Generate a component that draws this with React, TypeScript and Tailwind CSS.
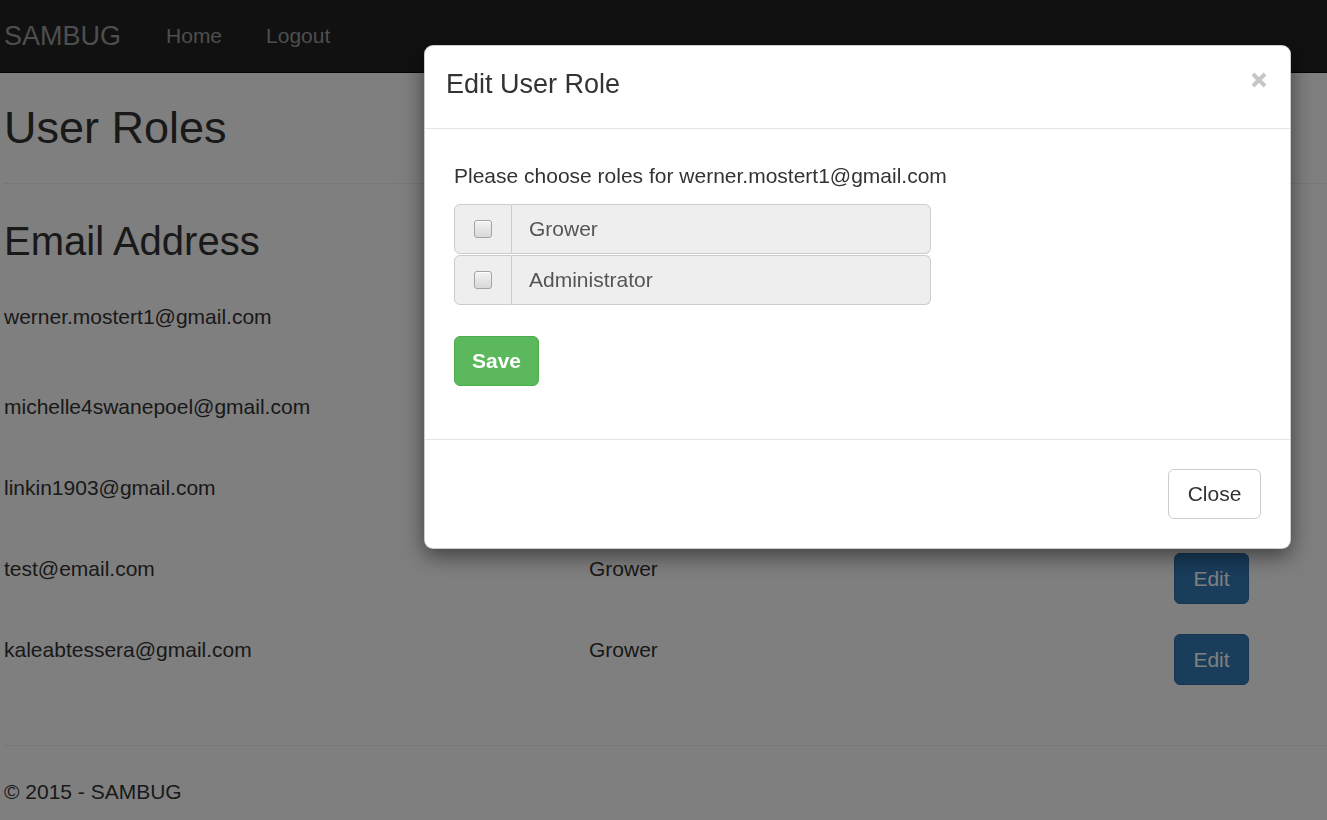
import React from 'react'

const users = [
  { email: 'werner.mostert1@gmail.com', role: 'Administrator', h: 'h-[90px]' },
  { email: 'michelle4swanepoel@gmail.com', role: 'Grower', h: 'h-[81px]' },
  { email: 'linkin1903@gmail.com', role: 'Grower', h: 'h-[81px]' },
  { email: 'test@email.com', role: 'Grower', h: 'h-[81px]' },
  { email: 'kaleabtessera@gmail.com', role: 'Grower', h: 'h-[81px]' },
]

const roles = ['Grower', 'Administrator']

const RoleRow: React.FC<{ label: string; first?: boolean }> = ({ label, first }) => (
  <div className={`flex w-[477px] h-[50px] ${first ? '' : 'mt-[1px]'}`}>
    <div className="w-[58px] bg-[#eee] border border-[#ccc] rounded-l-[6px] flex items-center justify-center">
      <span className="block w-[18px] h-[18px] rounded-[3px] border border-[#a3a3a3] bg-gradient-to-b from-[#f3f3f3] to-[#d9d9d9] shadow-[inset_0_1px_0_#fff]" />
    </div>
    <div className="flex-1 bg-[#eee] border border-l-0 border-[#ccc] rounded-r-[6px] pl-[17px] flex items-center text-[#555]">
      {label}
    </div>
  </div>
)

export default function App() {
  return (
    <div className="relative min-h-screen bg-white text-[#333] text-[21px] leading-[28px] font-['Liberation_Sans',Arial,sans-serif]">
      {/* Navbar */}
      <nav className="h-[73px] bg-[#222] border-b border-[#080808] flex items-center text-[#9d9d9d]">
        <span className="pl-[4px] text-[27px]">SAMBUG</span>
        <span className="ml-[45px]">Home</span>
        <span className="ml-[44px]">Logout</span>
      </nav>

      {/* Page */}
      <main className="pl-[4px]">
        <h1 className="mt-[30px] text-[45px] leading-[50px]">User Roles</h1>
        <hr className="mt-[30px] border-0 border-t border-[#eee]" />
        <h2 className="mt-[35px] text-[40px] leading-[44px]">Email Address</h2>

        <div className="mt-[23px]">
          {users.map((u) => (
            <div key={u.email} className={`grid grid-cols-[585px_585px_auto] pt-[15px] ${u.h}`}>
              <div className="pt-[2px]">{u.email}</div>
              <div className="pt-[2px]">{u.role}</div>
              <div>
                <button className="w-[75px] h-[51px] bg-[#337ab7] border border-[#2e6da4] rounded-[6px] text-white">
                  Edit
                </button>
              </div>
            </div>
          ))}
        </div>

        <hr className="mt-[45px] border-0 border-t border-[#eee]" />
        <footer className="mt-[32px]">© 2015 - SAMBUG</footer>
      </main>

      {/* Backdrop */}
      <div className="fixed inset-0 bg-black/50 z-[5]" />

      {/* Modal */}
      <div className="absolute left-[424px] top-[45px] w-[867px] z-10 bg-white border border-black/20 rounded-[9px] shadow-[0_7px_21px_rgba(0,0,0,0.5)]">
        <div className="h-[83px] border-b border-[#e5e5e5] flex items-start justify-between pl-[21px] pr-[23px] pt-[20px]">
          <h4 className="text-[27px] leading-[37px]">Edit User Role</h4>
          <button className="mt-[6px]" aria-label="Close">
            <svg width="16" height="16" viewBox="0 0 16 16">
              <path d="M2 2 L14 14 M14 2 L2 14" stroke="#c6c6c6" strokeWidth="4" strokeLinecap="butt" />
            </svg>
          </button>
        </div>

        <div className="pl-[29px] pt-[33px] pb-[53px]">
          <p>Please choose roles for werner.mostert1@gmail.com</p>
          <div className="mt-[14px]">
            {roles.map((r, i) => (
              <RoleRow key={r} label={r} first={i === 0} />
            ))}
          </div>
          <button className="mt-[31px] w-[85px] h-[50px] bg-[#5cb85c] border border-[#4cae4c] rounded-[6px] text-white font-bold">
            Save
          </button>
        </div>

        <div className="border-t border-[#e5e5e5] pt-[29px] pb-[29px] pr-[29px] flex justify-end">
          <button className="w-[93px] h-[50px] bg-white border border-[#ccc] rounded-[6px] text-[#333]">
            Close
          </button>
        </div>
      </div>
    </div>
  )
}
